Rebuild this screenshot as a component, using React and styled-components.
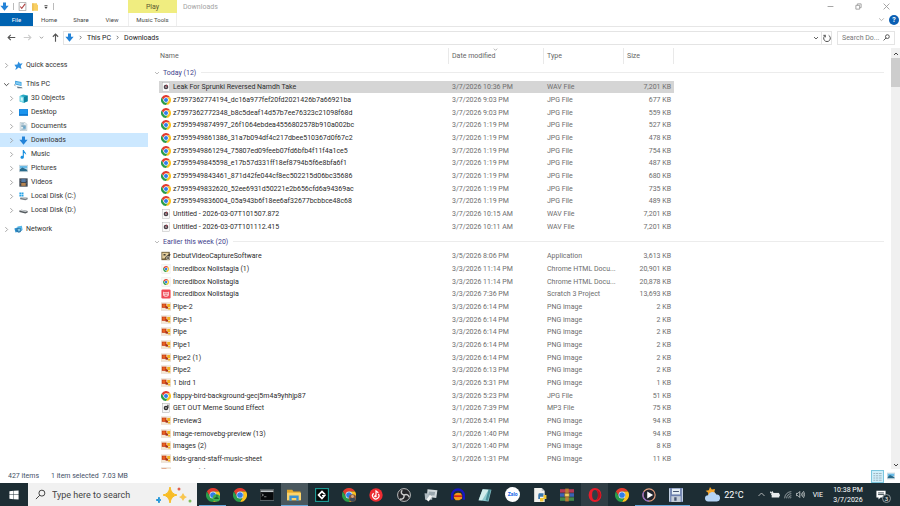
import { useState } from "react";
import styled, { createGlobalStyle, css } from "styled-components";

const GlobalStyle = createGlobalStyle`
  * {
    box-sizing: border-box;
  }

  body {
    margin: 0;
    background: #fff;
    overflow: hidden;
  }

  button, input {
    font: inherit;
    color: inherit;
    border: 0;
    padding: 0;
    background: none;
  }

  svg {
    display: block;
    flex-shrink: 0;
  }
`;

const Screen = styled.div`
  height: 100vh;
  display: flex;
  flex-direction: column;
  font-family: Roboto, "Open Sans", sans-serif;
  font-size: 7px;
  line-height: 12px;
  color: #333;
`;

/* ---------- small stroke icons ---------- */

const Stroke = styled.svg`
  width: ${(p) => p.$size || 7}px;
  height: ${(p) => p.$size || 7}px;
  fill: none;
  stroke: ${(p) => p.$color || "#666"};
  stroke-width: ${(p) => p.$weight || 2};
`;

const chevrons = {
  right: "M8 4l8 8-8 8",
  down: "M4 8l8 8 8-8",
  up: "M4 16l8-8 8 8",
};

const Chevron = ({ dir, size, color, weight }) => (
  <Stroke viewBox="0 0 24 24" $size={size} $color={color} $weight={weight || 3}>
    <path d={chevrons[dir]} />
  </Stroke>
);

const Arrow = ({ d, color }) => (
  <Stroke viewBox="0 0 24 24" $size={9} $color={color} $weight={3}>
    <path d={d} />
  </Stroke>
);

const Magnifier = ({ size, color, weight }) => (
  <Stroke viewBox="0 0 24 24" $size={size} $color={color} $weight={weight}>
    <circle cx="15" cy="9" r="6.5" />
    <path d="M10.5 13.5L2 22" />
  </Stroke>
);

/* ---------- coloured icons ---------- */

const Glyph = styled.svg`
  width: ${(p) => p.$size || 10}px;
  height: ${(p) => p.$size || 10}px;
`;

const ChromeShape = () => (
  <>
    <path fill="#e33b2e" d="M1.6 6A12 12 0 0 1 22.4 6L12 6A6 6 0 0 0 6.8 15Z" />
    <path fill="#fcc31e" d="M22.4 6A12 12 0 0 1 12 24L17.2 15A6 6 0 0 0 12 6Z" />
    <path fill="#2a9c48" d="M12 24A12 12 0 0 1 1.6 6L6.8 15A6 6 0 0 0 17.2 15Z" />
    <circle cx="12" cy="12" r="6" fill="#fff" />
    <circle cx="12" cy="12" r="4.9" fill="#2f7de9" />
  </>
);

const icons = {
  chrome: <ChromeShape />,
  chromeGreen: (
    <>
      <ChromeShape />
      <circle cx="18" cy="17" r="6.5" fill="#3fae51" />
      <path d="M14 19c0-5 8-5 8 0zM18 11.5a2 2 0 1 1 0 4" fill="#1d5f2b" />
    </>
  ),
  chromeUser: (
    <>
      <ChromeShape />
      <circle cx="18" cy="17" r="6.5" fill="#8a5a3c" />
      <path d="M13 20c1-5 9-5 10 0l-3 3h-4z" fill="#3b4a5c" />
      <circle cx="18" cy="14.5" r="2.5" fill="#d8a47c" />
    </>
  ),
  chromeDoc: (
    <>
      <rect x="2" y="1" width="20" height="22" fill="#f8f8f5" stroke="#e4e4e4" />
      <g transform="translate(5 5) scale(.6)"><ChromeShape /></g>
    </>
  ),
  audio: (
    <>
      <rect x="3" y="1" width="18" height="22" fill="#fafafa" stroke="#aaa" />
      <circle cx="12" cy="12" r="5.5" fill="#4a4048" />
      <circle cx="12" cy="12" r="2" fill="#f3dfe2" />
      <path d="M12 6v6l4-4z" fill="#a64050" />
    </>
  ),
  mp3: (
    <>
      <rect x="3" y="1" width="18" height="22" fill="#f7f7f7" stroke="#999" />
      <circle cx="12" cy="12" r="5.5" fill="#333" />
      <circle cx="12" cy="12" r="2" fill="#fff" />
      <path d="M15 4h3v8h-2z" fill="#333" />
    </>
  ),
  png: (
    <>
      <rect x="0" y="2" width="24" height="18" fill="#f4e6d4" stroke="#d8cbbb" />
      <path fill="#c9401b" d="M2 4h11v10H2z" />
      <circle cx="7" cy="9" r="3.5" fill="#e8641f" />
      <path fill="#a8321a" d="M11 10h6v6h-6z" />
      <path fill="#f2b01e" d="M15 5h7v7h-7zM17 14h5v4h-5z" />
    </>
  ),
  debut: (
    <>
      <rect x="1" y="2" width="20" height="20" fill="#705f3c" />
      <path fill="#e3cd9c" d="M3 4h15v5L8 18H3z" />
      <path fill="#433e36" d="M6 7h5v4H6zM10 15l11-9 2 3-9 12z" />
      <circle cx="17" cy="17" r="5" fill="#b3ab9a" />
      <circle cx="17" cy="17" r="2" fill="#333" />
    </>
  ),
  scratch: (
    <>
      <rect x="1" y="1" width="22" height="22" rx="3" fill="#ef4a57" />
      <path d="M5 6l3 2h8l3-2v9c-3 5-11 5-14 0z" fill="#fbd3d5" />
      <path d="M8 11h3m2 0h3m-7 4h6" stroke="#e4424f" strokeWidth="2" />
    </>
  ),
  download: <path fill="#2383d8" d="M8 1h8v9h7L12 23 1 10h7z" />,
  pin: (
    <path fill="#2e8fdf" d="M12 1l4 6 7-1-5 7 2 8-8-4-5 5-4 1 3-6-5-7 8-1z" />
  ),
  pc: (
    <>
      <path d="M3 2l17 3v11L3 12z" fill="#3b9fdc" />
      <path d="M5 5l13 2v6L5 10z" fill="#86cdf3" />
      <path d="M7 17l14 2 2 3H10z" fill="#657988" />
      <path d="M0 10l4 4v3l-4-3z" fill="#9aaeb9" />
    </>
  ),
  cube: (
    <>
      <path d="M2 5l9-4 12 3v15l-10 4L2 20z" fill="#27a9c5" />
      <path d="M2 5l11 3v15L2 20z" fill="#79dcea" />
      <path d="M13 8l10-4v15l-10 4z" fill="#0d829f" />
      <path d="M5 9l5 1v8l-5-1z" fill="#d6f6fa" />
    </>
  ),
  desktop: (
    <>
      <rect x="0" y="3" width="24" height="18" fill="#0d78d1" />
      <path d="M1 4h22v12H1z" fill="#1c95ee" />
    </>
  ),
  documents: (
    <>
      <path d="M3 1h13l5 5v17H3z" fill="#e6edf0" stroke="#8ca0aa" />
      <path d="M6 5h7M6 9h12M6 12h12M6 19h12" stroke="#6e98b2" strokeWidth="2" />
      <path d="M11 12h7v6h-7z" fill="#65a4c8" />
    </>
  ),
  music: <path fill="#188fdf" d="M10 0h3c0 5 7 6 6 13-1-3-3-4-6-5v11c0 6-9 6-9 1 0-4 4-5 6-4z" />,
  pictures: (
    <>
      <rect x="0" y="3" width="24" height="18" fill="#edf3f6" stroke="#9aaab2" />
      <path d="M2 5h20v7H2z" fill="#6abbe7" />
      <path d="M2 14l7-5 13 6v4H2z" fill="#286b8c" />
    </>
  ),
  videos: (
    <>
      <rect x="1" y="1" width="22" height="22" fill="#303844" />
      <path d="M6 3h12v8H6z" fill="#557ca7" />
      <path d="M6 13h12v8H6z" fill="#b58451" />
      <path d="M3 2v20M21 2v20" stroke="#8b95a3" strokeWidth="2" strokeDasharray="2 2" />
    </>
  ),
  diskC: (
    <>
      <path d="M1 1h5v5H1zM7 1h5v5H7zM1 7h5v5H1zM7 7h5v5H7z" fill="#26a4e8" />
      <path d="M3 15l6-2 14 2v4l-6 3-14-3z" fill="#777f85" />
      <path d="M3 15l6-2 14 2-6 3z" fill="#d1d6d9" />
    </>
  ),
  diskD: (
    <>
      <path d="M1 12l6-2 16 3v4l-6 3-16-4z" fill="#565c60" />
      <path d="M1 12l6-2 16 3-6 3z" fill="#c9ced1" />
    </>
  ),
  network: (
    <>
      <path d="M1 9l12-4v12L4 20z" fill="#2d91ce" />
      <path d="M9 4l12-2 2 11-11 6z" fill="#56b7e8" />
      <circle cx="13" cy="14" r="6.5" fill="#2d77aa" />
      <path d="M9 12l5-3 4 4-5 5z" fill="#7ec8e8" />
    </>
  ),
  cmd: (
    <>
      <rect x="0" y="3" width="24" height="18" fill="#07090b" stroke="#8e979b" />
      <path d="M1 4h22v3H1z" fill="#bec5c8" />
      <path d="M3 10l3 2-3 2m4 1h4" stroke="#ddd" fill="none" />
    </>
  ),
  explorer: (
    <>
      <path d="M0 3h9l2 3h12v15H0z" fill="#e7a928" />
      <path d="M0 8h24v13H0z" fill="#fbd36b" />
      <path d="M4 22V13h16v9h-4v-5H8v5z" fill="#3a91d2" />
    </>
  ),
  gamemaker: (
    <>
      <rect x="1" y="1" width="22" height="22" fill="#050808" stroke="#1d9893" strokeWidth="2" />
      <path d="M12 4l7 7h-4l-3-3-4 4 4 4 2-2h-2v-2h7l-7 8-8-8z" fill="#fff" />
    </>
  ),
  redMusic: (
    <>
      <circle cx="12" cy="12" r="11.5" fill="#ed2c32" />
      <path d="M12 13V5l4 3" stroke="#fff" strokeWidth="2" fill="none" />
      <path d="M8 9a5.500 5.500 0 1 0 8 1" fill="none" stroke="#fff" strokeWidth="2" />
      <circle cx="11" cy="14" r="2" fill="#fff" />
    </>
  ),
  obs: (
    <>
      <circle cx="12" cy="12" r="11" fill="#252529" stroke="#d0d0d0" strokeWidth="1.5" />
      <path d="M12 12c-5-1-6-5-3-8m3 8c5-2 8 0 9 4m-9-4c1 5-2 8-7 7" fill="none" stroke="#ccc" strokeWidth="2.5" />
    </>
  ),
  monitor: (
    <>
      <path d="M6 2l17 2-2 13-16-2z" fill="#d2d9dc" />
      <path d="M1 9l13 1v10H2z" fill="#aeb9bf" />
      <path d="M8 6l11 1-1 6-10-1z" fill="#9aa7ae" />
      <path d="M4 20l6-8 4 2-6 9z" fill="#f3f4f4" />
    </>
  ),
  audacity: (
    <>
      <path d="M2 20v-7C2-1 22-1 22 13v7" fill="none" stroke="#1716c3" strokeWidth="4" />
      <path d="M5 12l3-3 4-1 5 1 2 4v5l-5 3H8l-3-4z" fill="#f49a18" />
      <path d="M5 14h14" stroke="#cf241c" strokeWidth="3" />
    </>
  ),
  notepad: (
    <>
      <path d="M8 2l15 1-5 20-17-2z" fill="#8dc9ce" />
      <path d="M8 2l10 1L7 21l-6 0z" fill="#d3edec" />
      <path d="M18 3h4l-5 19-4-1z" fill="#4a8f98" />
    </>
  ),
  python: (
    <>
      <path d="M2 0h13l5 5v19H2z" fill="#f2f2ee" />
      <path d="M15 0v5h5" fill="#bfc4c6" />
      <path d="M10 9h8v6h-6v4H9v-7z" fill="#3c78ad" />
      <path d="M18 12h5v7h-5v4h-6v-6h6z" fill="#f2c735" />
    </>
  ),
  winrar: (
    <>
      <path d="M0 2h24v6H0z" fill="#b33a55" />
      <path d="M0 9h24v6H0z" fill="#3c62b3" />
      <path d="M0 16h24v6H0z" fill="#458a4b" />
      <path d="M9 1h6v22H9z" fill="#bd7b32" />
      <path d="M8 9h8v6H8z" fill="#f0d264" stroke="#6d4821" />
    </>
  ),
  opera: (
    <>
      <ellipse cx="12" cy="12" rx="11" ry="12" fill="#e81c2b" />
      <ellipse cx="12" cy="12" rx="5" ry="8.5" fill="#303e45" />
      <path d="M15 3c9 4 9 14 0 18 3-5 3-13 0-18z" fill="#b9101d" />
    </>
  ),
  player: (
    <>
      <circle cx="12" cy="12" r="10.5" fill="#20242d" stroke="#e6a07f" strokeWidth="2" />
      <path d="M3 7a10.5 10.5 0 0 0 9 15.5" stroke="#8c66c9" strokeWidth="2" fill="none" />
      <path d="M9 6l10 6-10 6z" fill="#fff" />
    </>
  ),
  capture: (
    <>
      <rect x="0" y="0" width="24" height="24" fill="#6b7fae" />
      <path d="M5 1h14v10H5z" fill="#e4edf4" />
      <path d="M4 14h16v10H4z" fill="#c3cdd8" />
      <path d="M1 1v22M23 1v22" stroke="#c2cfe2" strokeWidth="2" />
      <path d="M7 5h10v2H7zM9 16h4v6H9z" fill="#475674" />
    </>
  ),
};

const Icon = ({ name, size }) => (
  <Glyph viewBox="0 0 24 24" $size={size} aria-hidden="true">
    {icons[name]}
  </Glyph>
);

/* ---------- title bar and ribbon ---------- */

const TitleBar = styled.header`
  display: flex;
  height: 13px;
  align-items: center;
  color: #a3a3a3;
`;

const QuickTools = styled.div`
  width: 128px;
  display: flex;
  align-items: center;
  gap: 4px;
`;

const Divider = styled.span`
  width: 1px;
  height: 7px;
  background: #bbb;
`;

const PlayTab = styled.button`
  width: 49px;
  height: 13px;
  background: #f0ed80;
  color: #5b5930;
`;

const Title = styled.h1`
  flex: 1;
  margin: 0;
  padding-left: 6px;
  font-size: 7px;
  font-weight: 400;
`;

const WindowButtons = styled.div`
  display: flex;
`;

const WindowButton = styled.button`
  width: 28px;
  height: 13px;
  display: grid;
  place-items: center;
`;

const Ribbon = styled.nav`
  display: flex;
  height: 14px;
  border-bottom: 1px solid #e6e6e6;
`;

const TabGroup = styled.div`
  width: 177px;
  display: flex;
`;

const RibbonTab = styled.button`
  width: ${(p) => p.$width}px;
  font-size: 6px;
  color: #444;

  ${(p) => p.$file && css`
    background: #0063b1;
    color: #fff;
  `}

  ${(p) => p.$tools && css`
    margin-left: auto;
    border: solid #eee;
    border-width: 0 1px;
  `}
`;

const RibbonEnd = styled.div`
  margin-left: auto;
  display: flex;
  align-items: center;
  gap: 4px;
  padding-right: 1px;
`;

const Help = styled.button`
  width: 10px;
  height: 10px;
  border-radius: 50%;
  background: #0a5fb4;
  color: #fff;
  font-weight: 700;
  line-height: 10px;
`;

/* ---------- address row ---------- */

const AddressRow = styled.div`
  display: flex;
  align-items: center;
  height: 21px;
  padding: 0 5px 0 7px;
`;

const NavButtons = styled.div`
  width: 56px;
  display: flex;
  align-items: center;
  gap: 7px;
`;

const IconButton = styled.button`
  display: grid;
  place-items: center;
`;

const AddressBox = styled.div`
  flex: 1;
  height: 14px;
  display: flex;
  align-items: center;
  gap: 4px;
  padding-left: 1px;
  border: 1px solid #e4e4e4;
`;

const Crumb = styled.button`
  color: #222;
`;

const AddressEnd = styled.div`
  margin-left: auto;
  display: flex;
  align-items: center;
  gap: 2px;
`;

const Refresh = styled(IconButton)`
  width: 10px;
  height: 12px;
  border-left: 1px solid #e4e4e4;
`;

const SearchBox = styled.label`
  width: 58px;
  height: 14px;
  margin-left: 5px;
  padding: 0 4px;
  display: flex;
  align-items: center;
  border: 1px solid #e4e4e4;

  input {
    flex: 1;
    min-width: 0;
    outline: 0;
  }

  input::placeholder {
    color: #777;
    opacity: 1;
  }
`;

/* ---------- body ---------- */

const Body = styled.div`
  flex: 1;
  min-height: 0;
  display: flex;
`;

const Sidebar = styled.nav`
  width: 148px;
  flex-shrink: 0;
  padding-top: 10px;
`;

const TreeItem = styled.button`
  width: 100%;
  height: 14px;
  display: flex;
  align-items: center;
  gap: 3px;
  padding-left: ${(p) => (p.$nested ? 8 : 3)}px;
  margin-top: ${(p) => (p.$spaced ? 5 : 0)}px;
  background: ${(p) => (p.$active ? "#cce8ff" : "none")};

  svg + svg {
    margin-left: 1px;
  }
`;

const Files = styled.main`
  flex: 1;
  min-width: 0;
  overflow: hidden;
  padding-left: 3px;
`;

const FileTable = styled.table`
  width: 100%;
  table-layout: fixed;
  border-collapse: separate;
  border-spacing: 0;
`;

const Column = styled.col`
  width: ${(p) => (p.$width ? p.$width + "px" : "auto")};
`;

const HeadCell = styled.th`
  position: relative;
  height: 16px;
  padding: 0 0 0 ${(p) => (p.$first ? 9 : 3)}px;
  text-align: left;
  font-weight: 400;
  color: #666;
  border-right: 1px solid #e9e9e9;
`;

const SortMark = styled.span`
  position: absolute;
  top: -1px;
  left: 44px;
`;

const GroupCell = styled.th`
  height: 17px;
  padding: 0 7px 0 3px;
  font-weight: 400;
`;

const GroupToggle = styled.button`
  width: 100%;
  display: flex;
  align-items: center;
  gap: 3px;
  color: #42428c;

  &::after {
    content: "";
    flex: 1;
    height: 1px;
    margin-left: 2px;
    background: #ececec;
  }
`;

const Cell = styled.td`
  padding: 0 3px;
  color: #6d6d6d;
  line-height: 10px;
  white-space: nowrap;
  text-align: ${(p) => (p.$right ? "right" : "left")};
`;

const NameCell = styled(Cell)`
  color: #2b2b2b;
  padding: 0 0 0 2px;
  border-left: 8px solid transparent;
  background-clip: padding-box;
`;

const FileName = styled.span`
  display: flex;
  align-items: center;
  gap: 2px;
`;

const FileRow = styled.tr`
  height: 13px;

  &:nth-child(3n + 2) {
    height: 12px;
  }

  ${(p) => p.$selected && css`
    ${Cell}:not(:last-child) {
      background-color: #d5d5d5;
    }
  `}
`;

const Scrollbar = styled.div`
  width: 9px;
  display: flex;
  flex-direction: column;
  align-items: center;
  padding-top: 1px;
  background: #f0f0f0;
`;

const ScrollButton = styled(IconButton)`
  width: 9px;
  height: 9px;
`;

const Thumb = styled.div`
  width: 9px;
  height: 29px;
  margin-bottom: auto;
  background: #cdcdcd;
`;

const StatusBar = styled.footer`
  height: 14px;
  display: flex;
  align-items: center;
  gap: 12px;
  padding: 0 3px 0 8px;
  color: #3f4f66;
`;

const ViewButtons = styled.div`
  margin-left: auto;
  display: flex;
`;

const ViewButton = styled.button`
  width: 13px;
  height: 13px;
  display: grid;
  place-items: center;

  ${(p) => p.$on && css`
    background: #cfeefa;
    border: 1px solid #7cc6de;
  `}
`;

/* ---------- taskbar ---------- */

const Taskbar = styled.footer`
  height: 23px;
  display: flex;
  background: #1d2d34;
  color: #fff;
`;

const Start = styled.button`
  width: 28px;
  display: grid;
  place-items: center;
`;

const TaskSearch = styled.label`
  width: 169px;
  display: flex;
  align-items: center;
  gap: 6px;
  padding: 0 5px 0 7px;
  background: #f1f1f1;
  color: #333;
  font-size: 9px;

  input {
    flex: 1;
    min-width: 0;
    outline: 0;
  }

  input::placeholder {
    color: #444;
    opacity: 1;
  }
`;

const Sparkles = styled.svg`
  width: 36px;
  height: 18px;
`;

const Apps = styled.div`
  width: 491px;
  margin-left: 2px;
  display: grid;
  grid-auto-flow: column;
  grid-auto-columns: 1fr;
`;

const AppButton = styled.button`
  display: grid;
  place-items: center;
  background: ${(p) => (p.$focus ? "#4a585e" : p.$hover ? "#303e45" : "none")};
  box-shadow: ${(p) => (p.$open ? "inset 0 -1px #68a9dc" : "none")};
`;

const ZaloBadge = styled.span`
  width: 15px;
  height: 15px;
  border-radius: 50%;
  background: #fff;
  color: #1769e8;
  font-size: 5px;
  font-weight: 700;
  line-height: 15px;
`;

const Tray = styled.div`
  margin-left: auto;
  display: flex;
  align-items: center;
`;

const Weather = styled.button`
  display: flex;
  align-items: center;
  gap: 4px;
  font-size: 9px;
  margin-right: 13px;
`;

const TrayIcons = styled.div`
  display: flex;
  align-items: center;
  gap: 4px;
  margin-right: 8px;
`;

const Clock = styled.time`
  width: 32px;
  margin-left: 9px;
  line-height: 10px;
  text-align: center;
`;

const Notifications = styled.button`
  position: relative;
  margin: 0 14px 0 12px;
`;

const Count = styled.span`
  position: absolute;
  top: 4px;
  left: 6px;
  width: 9px;
  height: 9px;
  border: 1px solid #8d979b;
  border-radius: 50%;
  background: #1d2d34;
  font-size: 6px;
  line-height: 7px;
`;

/* ---------- data ---------- */

const tree = [
  { label: "Quick access", icon: "pin" },
  { label: "This PC", icon: "pc", open: true, spaced: true },
  { label: "3D Objects", icon: "cube", nested: true },
  { label: "Desktop", icon: "desktop", nested: true },
  { label: "Documents", icon: "documents", nested: true },
  { label: "Downloads", icon: "download", nested: true, active: true },
  { label: "Music", icon: "music", nested: true },
  { label: "Pictures", icon: "pictures", nested: true },
  { label: "Videos", icon: "videos", nested: true },
  { label: "Local Disk (C:)", icon: "diskC", nested: true },
  { label: "Local Disk (D:)", icon: "diskD", nested: true },
  { label: "Network", icon: "network", spaced: true },
];

const groups = [
  {
    title: "Today (12)",
    files: [
      ["audio", "Leak For Sprunki Reversed Namdh Take", "3/7/2026 10:36 PM", "WAV File", "7,201 KB"],
      ["chrome", "z7597362774194_dc16a977fef20fd2021426b7a66921ba", "3/7/2026 9:03 PM", "JPG File", "677 KB"],
      ["chrome", "z7597362772348_b8c5deaf14d57b7ee76323c21098f68d", "3/7/2026 9:03 PM", "JPG File", "559 KB"],
      ["chrome", "z7595949874997_26f1064ebdea4556802578b910a002bc", "3/7/2026 1:19 PM", "JPG File", "527 KB"],
      ["chrome", "z7595949861386_31a7b094df4c217dbee510367d0f67c2", "3/7/2026 1:19 PM", "JPG File", "478 KB"],
      ["chrome", "z7595949861294_75807ed09feeb07fd6bfb4f11f4a1ce5", "3/7/2026 1:19 PM", "JPG File", "754 KB"],
      ["chrome", "z7595949845598_e17b57d331ff18ef8794b5f6e8bfa6f1", "3/7/2026 1:19 PM", "JPG File", "487 KB"],
      ["chrome", "z7595949843461_871d42fe044cf8ec502215d06bc35686", "3/7/2026 1:19 PM", "JPG File", "680 KB"],
      ["chrome", "z7595949832620_52ee6931d50221e2b656cfd6a94369ac", "3/7/2026 1:19 PM", "JPG File", "735 KB"],
      ["chrome", "z7595949836004_05a943b6f18ee6af32677bcbbce48c68", "3/7/2026 1:19 PM", "JPG File", "489 KB"],
      ["audio", "Untitled - 2026-03-07T101507.872", "3/7/2026 10:15 AM", "WAV File", "7,201 KB"],
      ["audio", "Untitled - 2026-03-07T101112.415", "3/7/2026 10:11 AM", "WAV File", "7,201 KB"],
    ],
  },
  {
    title: "Earlier this week (20)",
    files: [
      ["debut", "DebutVideoCaptureSoftware", "3/5/2026 8:06 PM", "Application", "3,613 KB"],
      ["chromeDoc", "Incredibox Nolistagia (1)", "3/3/2026 11:14 PM", "Chrome HTML Docu...", "20,901 KB"],
      ["chromeDoc", "Incredibox Nolistagia", "3/3/2026 11:14 PM", "Chrome HTML Docu...", "20,878 KB"],
      ["scratch", "Incredibox Nolistagia", "3/3/2026 7:36 PM", "Scratch 3 Project", "13,693 KB"],
      ["png", "Pipe-2", "3/3/2026 6:14 PM", "PNG image", "2 KB"],
      ["png", "Pipe-1", "3/3/2026 6:14 PM", "PNG image", "2 KB"],
      ["png", "Pipe", "3/3/2026 6:14 PM", "PNG image", "2 KB"],
      ["png", "Pipe1", "3/3/2026 6:14 PM", "PNG image", "2 KB"],
      ["png", "Pipe2 (1)", "3/3/2026 6:14 PM", "PNG image", "2 KB"],
      ["png", "Pipe2", "3/3/2026 6:13 PM", "PNG image", "2 KB"],
      ["png", "1 bird 1", "3/3/2026 5:31 PM", "PNG image", "1 KB"],
      ["chrome", "flappy-bird-background-gecj5m4a9yhhjp87", "3/3/2026 5:23 PM", "JPG File", "51 KB"],
      ["mp3", "GET OUT Meme Sound Effect", "3/1/2026 7:39 PM", "MP3 File", "75 KB"],
      ["png", "Preview3", "3/1/2026 5:41 PM", "PNG image", "94 KB"],
      ["png", "image-removebg-preview (13)", "3/1/2026 1:40 PM", "PNG image", "94 KB"],
      ["png", "images (2)", "3/1/2026 1:40 PM", "PNG image", "8 KB"],
      ["png", "kids-grand-staff-music-sheet", "3/1/2026 1:31 PM", "PNG image", "11 KB"],
      ["png", "images (1)", "3/1/2026 12:33 PM", "PNG image", "8 KB"],
    ],
  },
];

const apps = [
  { icon: "chromeGreen", label: "Chrome, green profile", open: true },
  { icon: "chrome", label: "Chrome" },
  { icon: "cmd", label: "Command Prompt" },
  { icon: "explorer", label: "File Explorer", open: true, focus: true },
  { icon: "gamemaker", label: "GameMaker" },
  { icon: "chromeUser", label: "Chrome, second profile" },
  { icon: "redMusic", label: "Music" },
  { icon: "obs", label: "OBS Studio" },
  { icon: "monitor", label: "Remote display" },
  { icon: "audacity", label: "Audacity" },
  { icon: "notepad", label: "Notepad" },
  { icon: "zalo", label: "Zalo" },
  { icon: "python", label: "Python" },
  { icon: "winrar", label: "WinRAR" },
  { icon: "opera", label: "Opera", hover: true },
  { icon: "chrome", label: "Chrome window" },
  { icon: "player", label: "Media Player", open: true },
  { icon: "capture", label: "Debut Video Capture", open: true },
];

const FileGroup = ({ title, files, selected, onSelect }) => (
  <tbody>
    <tr>
      <GroupCell colSpan={5} scope="rowgroup">
        <GroupToggle>
          <Chevron dir="down" size={6} color="#777" weight={2} />
          {title}
        </GroupToggle>
      </GroupCell>
    </tr>
    {files.map(([icon, name, date, type, size]) => (
      <FileRow key={name + type} $selected={selected === name} onClick={() => onSelect(name)}>
        <NameCell>
          <FileName>
            <Icon name={icon} size={10} />
            {name}
          </FileName>
        </NameCell>
        <Cell>{date}</Cell>
        <Cell>{type}</Cell>
        <Cell $right>{size}</Cell>
        <Cell />
      </FileRow>
    ))}
  </tbody>
);

const ExplorerHeader = () => (
  <>
    <TitleBar>
      <QuickTools>
        <Icon name="download" size={9} />
        <Divider />
        <Glyph viewBox="0 0 24 24" $size={9}>
          <path d="M3 1h18v22H3z" fill="#fff" stroke="#999" strokeWidth="2" />
          <path d="M6 12l4 5 9-12" fill="none" stroke="#b04545" strokeWidth="3" />
        </Glyph>
        <Glyph viewBox="0 0 24 24" $size={8}>
          <path d="M4 1h14v4h3v18H4z" fill="#f8cf63" />
          <path d="M4 1h3v22H4z" fill="#e6b23c" />
        </Glyph>
        <Glyph viewBox="0 0 24 24" $size={6}>
          <path d="M6 4h12v3H6zM5 11h14l-7 9z" fill="#444" />
        </Glyph>
        <Divider />
      </QuickTools>
      <PlayTab>Play</PlayTab>
      <Title>Downloads</Title>
      <WindowButtons>
        <WindowButton aria-label="Minimize">
          <Stroke viewBox="0 0 24 24" $color="#999" $weight={3}><path d="M2 12h20" /></Stroke>
        </WindowButton>
        <WindowButton aria-label="Restore">
          <Stroke viewBox="0 0 24 24" $color="#999" $weight={3}><path d="M3 8h13v13H3zM8 8V3h13v13h-5" /></Stroke>
        </WindowButton>
        <WindowButton aria-label="Close">
          <Stroke viewBox="0 0 24 24" $color="#999" $weight={3}><path d="M2 2l20 20M22 2L2 22" /></Stroke>
        </WindowButton>
      </WindowButtons>
    </TitleBar>
    <Ribbon>
      <TabGroup>
        <RibbonTab $width={33} $file>File</RibbonTab>
        <RibbonTab $width={32}>Home</RibbonTab>
        <RibbonTab $width={32}>Share</RibbonTab>
        <RibbonTab $width={30}>View</RibbonTab>
        <RibbonTab $width={49} $tools>Music Tools</RibbonTab>
      </TabGroup>
      <RibbonEnd>
        <IconButton aria-label="Expand the ribbon"><Chevron dir="down" color="#aaa" /></IconButton>
        <Help>?</Help>
      </RibbonEnd>
    </Ribbon>
    <AddressRow>
      <NavButtons>
        <IconButton aria-label="Back"><Arrow d="M22 12H3m7-7l-7 7 7 7" color="#555" /></IconButton>
        <IconButton aria-label="Forward"><Arrow d="M2 12h19m-7-7l7 7-7 7" color="#ccc" /></IconButton>
        <IconButton aria-label="Recent locations"><Chevron dir="down" size={5} /></IconButton>
        <IconButton aria-label="Up"><Arrow d="M12 23V3M5 10l7-7 7 7" color="#555" /></IconButton>
      </NavButtons>
      <AddressBox>
        <Icon name="download" size={9} />
        <Chevron dir="right" size={5} weight={4} />
        <Crumb>This PC</Crumb>
        <Chevron dir="right" size={5} weight={4} />
        <Crumb>Downloads</Crumb>
        <AddressEnd>
          <IconButton aria-label="Previous locations"><Chevron dir="down" size={6} weight={4} /></IconButton>
          <Refresh aria-label="Refresh">
            <Stroke viewBox="0 0 24 24" $size={8} $color="#555" $weight={3}>
              <path d="M17 4a10 10 0 1 1-10 0M7 10V4H1" />
            </Stroke>
          </Refresh>
        </AddressEnd>
      </AddressBox>
      <SearchBox>
        <input placeholder="Search Do..." aria-label="Search Downloads" />
        <Magnifier size={7} color="#444" weight={3} />
      </SearchBox>
    </AddressRow>
  </>
);

const WindowsTaskbar = () => (
  <Taskbar>
    <Start aria-label="Start">
      <Glyph viewBox="0 0 24 24" $size={10}>
        <path d="M1 3l10-1v9H1zM12 2l11-1v10H12zM1 12h10v10L1 21zM12 12h11v11l-11-1z" fill="#fff" />
      </Glyph>
    </Start>
    <TaskSearch>
      <Magnifier size={11} color="#333" weight={2} />
      <input placeholder="Type here to search" aria-label="Type here to search" />
      <Sparkles viewBox="0 0 36 18">
        <path d="M14 1q1 7 7 8-6 1-7 8-1-7-7-8 6-1 7-8z" fill="#f8bd27" stroke="#f8bd27" />
        <path d="M27 7q1 3 4 4-3 1-4 4-1-3-4-4 3-1 4-4z" fill="#f8c64f" />
        <path d="M3 11q0 3 2 3-2 0-2 3 0-3-3-3 3 0 3-3z" fill="#2196d8" stroke="#2196d8" />
        <circle cx="23" cy="3" r="1.5" fill="#df604c" />
        <circle cx="34" cy="15" r="1.5" fill="#82bd5b" />
      </Sparkles>
    </TaskSearch>
    <Apps>
      {apps.map((app) => (
        <AppButton key={app.label} aria-label={app.label} $open={app.open} $focus={app.focus} $hover={app.hover}>
          {app.icon === "zalo" ? <ZaloBadge>Zalo</ZaloBadge> : <Icon name={app.icon} size={14} />}
        </AppButton>
      ))}
    </Apps>
    <Tray>
      <Weather>
        <Glyph viewBox="0 0 24 24" $size={15}>
          <path d="M8 0l3 4 5-1-1 5 3 4-7 3-6-2 0-4-4-3 5-1z" fill="#f6a62c" />
          <path d="M5 23a5 5 0 0 1 0-10 7 7 0 0 1 13-1 5.5 5.5 0 0 1 1 11z" fill="#b5d4f5" />
        </Glyph>
        22°C
      </Weather>
      <TrayIcons>
        <Chevron dir="up" size={9} color="#ddd" weight={2} />
        <Glyph viewBox="0 0 24 24" $size={10}>
          <path d="M4 7h18v11H4z" fill="#e8eced" />
          <path d="M0 6h8M2 3v5M6 3v5M4 8v4" stroke="#e8eced" strokeWidth="2" />
          <path d="M22 10h2v5h-2z" fill="#e8eced" />
        </Glyph>
        <Stroke viewBox="0 0 24 24" $size={8} $color="#cdd3d5" $weight={2}>
          <path d="M2 22A20 20 0 0 1 22 2M8 22A14 14 0 0 1 22 8M14 22a8 8 0 0 1 8-8M19 22a3 3 0 0 1 3-3" />
        </Stroke>
        <Stroke viewBox="0 0 24 24" $size={9} $color="#dde1e2" $weight={2}>
          <path d="M1 9h4l5-5v16l-5-5H1zM14 9q2 3 0 6M17 6q4 6 0 12M20 3q6 9 0 18" />
        </Stroke>
      </TrayIcons>
      <span>VIE</span>
      <Clock>10:38 PM<br />3/7/2026</Clock>
      <Notifications aria-label="3 notifications">
        <Glyph viewBox="0 0 24 24" $size={10}>
          <path d="M1 2h22v16H11l-5 5v-5H1z" fill="#fff" />
          <path d="M5 7h14M5 11h14" stroke="#1d2d34" strokeWidth="2" />
        </Glyph>
        <Count>3</Count>
      </Notifications>
    </Tray>
  </Taskbar>
);

const App = () => {
  const [selected, setSelected] = useState("Leak For Sprunki Reversed Namdh Take");

  return (
    <>
      <GlobalStyle />
      <Screen>
        <ExplorerHeader />
        <Body>
          <Sidebar>
            {tree.map((item) => (
              <TreeItem key={item.label} $nested={item.nested} $spaced={item.spaced} $active={item.active}>
                <Chevron dir={item.open ? "down" : "right"} color={item.open ? "#333" : "#999"} />
                <Icon name={item.icon} size={9} />
                {item.label}
              </TreeItem>
            ))}
          </Sidebar>
          <Files>
            <FileTable>
              <colgroup>
                <Column $width={298} />
                <Column $width={95} />
                <Column $width={80} />
                <Column $width={50} />
                <Column />
              </colgroup>
              <thead>
                <tr>
                  <HeadCell $first>Name</HeadCell>
                  <HeadCell>
                    Date modified
                    <SortMark><Chevron dir="down" size={5} color="#888" /></SortMark>
                  </HeadCell>
                  <HeadCell>Type</HeadCell>
                  <HeadCell>Size</HeadCell>
                </tr>
              </thead>
              {groups.map((group) => (
                <FileGroup key={group.title} {...group} selected={selected} onSelect={setSelected} />
              ))}
            </FileTable>
          </Files>
          <Scrollbar>
            <ScrollButton aria-label="Scroll up"><Chevron dir="up" size={6} color="#444" weight={4} /></ScrollButton>
            <Thumb />
            <ScrollButton aria-label="Scroll down"><Chevron dir="down" size={6} color="#444" weight={4} /></ScrollButton>
          </Scrollbar>
        </Body>
        <StatusBar>
          <span>427 items</span>
          <span>1 item selected&nbsp; 7.03 MB</span>
          <ViewButtons>
            <ViewButton $on aria-label="Details view">
              <Stroke viewBox="0 0 24 24" $size={9} $color="#8fa3ad" $weight={2}>
                <path d="M1 4h5m2 0h6m2 0h7M1 10h5m2 0h6m2 0h7M1 16h5m2 0h6m2 0h7M1 22h5m2 0h6m2 0h7" />
              </Stroke>
            </ViewButton>
            <ViewButton aria-label="Large icons view"><Icon name="pictures" size={8} /></ViewButton>
          </ViewButtons>
        </StatusBar>
        <WindowsTaskbar />
      </Screen>
    </>
  );
};

export default App;
